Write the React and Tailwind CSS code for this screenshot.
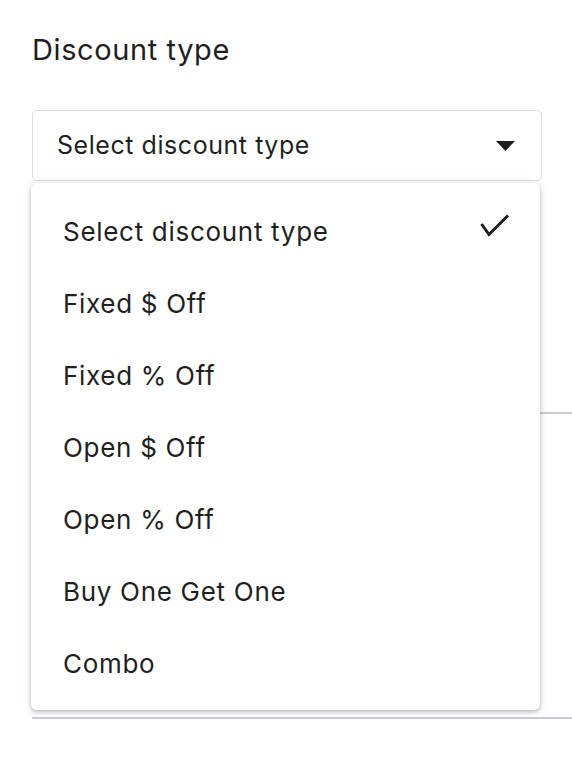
import React, { useState } from "react";

const options = [
  "Select discount type",
  "Fixed $ Off",
  "Fixed % Off",
  "Open $ Off",
  "Open % Off",
  "Buy One Get One",
  "Combo",
];

export default function App() {
  const [selected] = useState(0);

  return (
    <div className="min-h-[762px] w-[572px] overflow-hidden bg-white pl-[32px] pt-[30px] font-['Inter',sans-serif] text-[#1f1f1f]">
      <h2 className="text-[29px] leading-[40px] tracking-[0.6px]">Discount type</h2>

      {/* select + open menu */}
      <div className="relative mt-[40px] w-[510px]">
        <div className="flex h-[71px] items-center justify-between rounded-[5px] border border-[#dcdbe1] pl-[24px] pr-[24px]">
          <span className="text-[25px] tracking-[0.55px]">{options[selected]}</span>
          <svg width="20" height="10" viewBox="0 0 20 10" className="mr-[1px]">
            <path d="M0 0 H19 L9.5 10 Z" fill="#1f1f1f" />
          </svg>
        </div>

        <div className="absolute left-[-1px] top-[73px] z-10 w-[509px] rounded-[6px] bg-white pb-[11px] pt-[12px] shadow-[0_2px_4px_rgba(0,0,0,0.25),0_0_12px_rgba(0,0,0,0.08)]">
          {options.map((opt, i) => (
            <div key={opt} className="flex h-[72px] items-center justify-between pl-[32px] pr-[30px]">
              <span className="text-[26px] tracking-[0.7px]">{opt}</span>
              {i === selected && (
                <svg width="30" height="24" viewBox="0 0 30 24" className="-mt-[10px]">
                  <path d="M1.5 10 L9 20.5 L28 1.5" fill="none" stroke="#1f1f1f" strokeWidth="3" />
                </svg>
              )}
            </div>
          ))}
        </div>
      </div>

      {/* rows behind the menu */}
      <div className="w-[600px]">
        <div className="h-[233px] border-b-2 border-[#cbc9d4]" />
        <div className="h-[305px] border-b-2 border-[#cbc9d4]" />
      </div>
    </div>
  );
}
